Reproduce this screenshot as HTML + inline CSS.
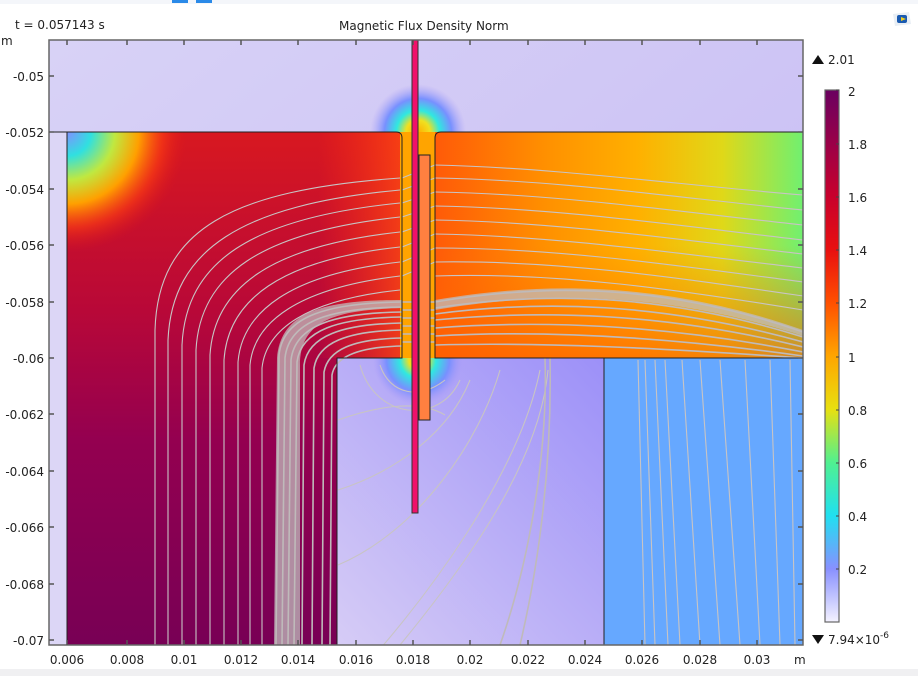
<!DOCTYPE html>
<html><head><meta charset="utf-8"><style>
html,body{margin:0;padding:0;background:#fff;width:918px;height:676px;overflow:hidden;font-family:"Liberation Sans","DejaVu Sans",sans-serif}
svg text{font-family:"DejaVu Sans","Liberation Sans",sans-serif;font-size:12px;fill:#222}
</style></head><body>
<svg width="918" height="676" viewBox="0 0 918 676" xmlns="http://www.w3.org/2000/svg">
<defs>
<linearGradient id="top" x1="0" y1="0" x2="1" y2="1"><stop offset="0" stop-color="#d8d2f6"/><stop offset="1" stop-color="#c4b8f4"/></linearGradient>
<linearGradient id="leftg" x1="0" y1="0" x2="0" y2="1"><stop offset="0" stop-color="#d81820"/><stop offset="0.35" stop-color="#b80838"/><stop offset="0.6" stop-color="#940050"/><stop offset="1" stop-color="#780055"/></linearGradient>
<linearGradient id="leftx" x1="0" y1="0" x2="1" y2="0"><stop offset="0.75" stop-color="#ff3010" stop-opacity="0"/><stop offset="1" stop-color="#ff4a10" stop-opacity="0.8"/></linearGradient>
<radialGradient id="corner" cx="67" cy="132" r="120" gradientUnits="userSpaceOnUse"><stop offset="0" stop-color="#8090ff"/><stop offset="0.2" stop-color="#30e0e0"/><stop offset="0.4" stop-color="#c0e840"/><stop offset="0.6" stop-color="#ffa000"/><stop offset="0.8" stop-color="#ff4010" stop-opacity="0.6"/><stop offset="1" stop-color="#e01818" stop-opacity="0"/></radialGradient>
<linearGradient id="rightg" x1="435" y1="0" x2="803" y2="0" gradientUnits="userSpaceOnUse"><stop offset="0" stop-color="#ff5a08"/><stop offset="0.3" stop-color="#ff9000"/><stop offset="0.55" stop-color="#ffb000"/><stop offset="0.78" stop-color="#e0d818"/><stop offset="1" stop-color="#70f070"/></linearGradient>
<linearGradient id="rightv" x1="0" y1="132" x2="0" y2="358" gradientUnits="userSpaceOnUse"><stop offset="0.5" stop-color="#ff7000" stop-opacity="0"/><stop offset="1" stop-color="#ff6000" stop-opacity="0.7"/></linearGradient>
<linearGradient id="midlow" x1="1" y1="0" x2="0" y2="1"><stop offset="0" stop-color="#9c90f8"/><stop offset="1" stop-color="#d6ccf6"/></linearGradient>
<radialGradient id="hot1" cx="418" cy="132" r="48" gradientUnits="userSpaceOnUse"><stop offset="0" stop-color="#ffb000"/><stop offset="0.25" stop-color="#f0e020"/><stop offset="0.45" stop-color="#30e8e0"/><stop offset="0.7" stop-color="#7890ff"/><stop offset="1" stop-color="#b0a4f6" stop-opacity="0"/></radialGradient>
<radialGradient id="hot2" cx="418" cy="360" r="45" gradientUnits="userSpaceOnUse"><stop offset="0" stop-color="#ffb000"/><stop offset="0.2" stop-color="#f0e020"/><stop offset="0.4" stop-color="#30e8e0"/><stop offset="0.7" stop-color="#7890ff"/><stop offset="1" stop-color="#a898f8" stop-opacity="0"/></radialGradient>
<linearGradient id="cbar" x1="0" y1="0" x2="0" y2="1"><stop offset="0" stop-color="#6a0060"/><stop offset="0.1" stop-color="#9a0048"/><stop offset="0.2" stop-color="#c8002c"/><stop offset="0.3" stop-color="#e81010"/><stop offset="0.4" stop-color="#ff5000"/><stop offset="0.5" stop-color="#ffa500"/><stop offset="0.6" stop-color="#e8e010"/><stop offset="0.7" stop-color="#50f090"/><stop offset="0.8" stop-color="#20e0f0"/><stop offset="0.9" stop-color="#8890ff"/><stop offset="1" stop-color="#f4f2ff"/></linearGradient>
<clipPath id="plot"><rect x="49" y="40" width="754" height="605"/></clipPath>
</defs>
<rect x="0" y="0" width="918" height="4" fill="#f4f6fa"/>
<rect x="172" y="0" width="16" height="3" fill="#2a8ae8"/><rect x="196" y="0" width="16" height="3" fill="#2a8ae8"/>
<rect x="0" y="669" width="918" height="7" fill="#f0f0f2"/>
<g clip-path="url(#plot)">
<rect x="49" y="40" width="754" height="605" fill="url(#top)"/>
<rect x="49" y="132" width="18" height="513" fill="#dcd6f6"/>
<rect x="340" y="60" width="160" height="75" fill="url(#hot1)"/>
<rect x="67" y="132" width="335" height="513" fill="url(#leftg)"/>
<rect x="67" y="132" width="335" height="226" fill="url(#leftx)"/>
<rect x="67" y="132" width="200" height="150" fill="url(#corner)"/>
<rect x="400" y="132" width="36" height="226" fill="#ffa400"/>
<rect x="435" y="132" width="368" height="226" fill="url(#rightg)"/>
<rect x="435" y="132" width="368" height="226" fill="url(#rightv)"/>
<rect x="337" y="358" width="267" height="287" fill="url(#midlow)"/>
<rect x="360" y="358" width="120" height="60" fill="url(#hot2)"/>
<rect x="604" y="358" width="199" height="287" fill="#66a8ff"/>
<g fill="none" stroke="#c8c4c4" stroke-width="1.1">
<path d="M155 645 L155 330 C158 230 230 190 400 178"/>
<path d="M168 645 L168 340 C172 250 240 205 400 190"/>
<path d="M182 645 L182 345 C186 262 250 218 400 203"/>
<path d="M196 645 L196 350 C200 275 260 232 400 217"/>
<path d="M210 645 L210 355 C214 288 270 246 400 232"/>
<path d="M224 645 L224 360 C228 300 280 260 400 247"/>
<path d="M238 645 L238 362 C242 312 290 274 400 262"/>
<path d="M250 645 L250 365 C254 322 298 288 400 276"/>
<path d="M262 645 L262 368 C266 330 305 300 400 290"/>
<path d="M435 165 C560 168 680 185 803 195"/>
<path d="M435 178 C560 180 680 198 803 210"/>
<path d="M435 192 C560 194 680 212 803 225"/>
<path d="M435 206 C560 208 680 226 803 240"/>
<path d="M435 220 C560 222 680 240 803 254"/>
<path d="M435 234 C560 236 680 254 803 268"/>
<path d="M435 248 C560 248 680 266 803 282"/>
<path d="M435 262 C560 260 680 278 803 296"/>
<path d="M435 276 C560 272 680 290 803 310"/>
<path d="M402 178 L435 165 M402 190 L435 178 M402 203 L435 192 M402 217 L435 206 M402 232 L435 220 M402 247 L435 234 M402 262 L435 248 M402 276 L435 262"/>
<path d="M338 420 C380 405 420 400 445 415"/>
<path d="M338 490 C400 470 450 430 470 380"/>
<path d="M338 565 C420 530 480 440 500 370"/>
<path d="M338 695 C430 600 520 470 540 370"/>
<path d="M400 645 C470 560 540 460 548 370"/>
<path d="M380 365 C390 395 420 400 445 380"/>
<path d="M360 365 C375 420 440 425 460 380"/>
<path d="M645 645 L638 360 M655 645 L645 360 M668 645 L655 360 M680 645 L665 360 M700 645 L682 360 M720 645 L700 360 M740 645 L720 360 M760 645 L745 360 M780 645 L770 360 M795 645 L790 360"/>
</g>
<path d="M274 645 L277 358 C281 312 322 300 402 300 L402 308 C340 310 300 318 300 365 L300 645 Z" fill="#c0bcbc" opacity="0.75"/>
<path d="M435 300 C540 282 660 280 803 330 L803 336 C660 290 540 292 435 310 Z" fill="#c0bcbc" opacity="0.75"/>
<g fill="none" stroke="#bfbaba" stroke-width="1.6">
<path d="M276 645 L279 355 C283 315 330 303 402 302"/>
<path d="M282 645 L285 358 C289 320 332 308 402 307"/>
<path d="M288 645 L291 360 C295 325 335 313 402 312"/>
<path d="M294 645 L297 362 C301 330 338 318 402 317"/>
<path d="M302 645 L304 365 C308 336 342 324 402 323"/>
<path d="M312 645 L314 368 C318 343 346 331 402 330"/>
<path d="M322 645 L324 372 C328 350 352 339 402 338"/>
<path d="M330 645 L332 375 C335 357 358 347 402 346"/>
<path d="M435 302 C540 284 660 282 803 332"/>
<path d="M435 308 C540 292 660 292 803 337"/>
<path d="M435 314 C540 300 660 302 803 342"/>
<path d="M435 320 C540 310 660 312 803 347"/>
<path d="M435 328 C540 320 660 324 803 352"/>
<path d="M435 336 C540 330 660 336 803 356"/>
<path d="M435 345 C540 342 660 348 803 358"/>
<path d="M402 302 L435 302 M402 310 L435 310 M402 318 L435 318 M402 326 L435 326 M402 334 L435 334 M402 342 L435 342"/>
<path d="M545 358 C548 450 530 560 500 645 M550 358 C552 460 540 560 520 645"/>
</g>
<g fill="none" stroke="#222" stroke-width="1">
<path d="M49 132 L396 132 Q402 132 402 138 L402 358 L337 358 L337 645"/>
<path d="M67 132 L67 645"/>
<path d="M803 132 L441 132 Q435 132 435 138 L435 358 L803 358"/>
<path d="M604 358 L604 645"/>
</g>
<rect x="419" y="155" width="11" height="265" fill="#ff8040" stroke="#222" stroke-width="1"/>
<rect x="412" y="38" width="6" height="475" fill="#f0106a" stroke="#333" stroke-width="1"/>
</g>
<rect x="49" y="40" width="754" height="605" fill="none" stroke="#666" stroke-width="1.5"/>
<g stroke="#555" stroke-width="1.5">
<path d="M67 40v5M127 40v5M184 40v5M241 40v5M298 40v5M356 40v5M413 40v5M470 40v5M528 40v5M585 40v5M642 40v5M700 40v5M757 40v5"/>
<path d="M67 645v-5M127 645v-5M184 645v-5M241 645v-5M298 645v-5M356 645v-5M413 645v-5M470 645v-5M528 645v-5M585 645v-5M642 645v-5M700 645v-5M757 645v-5"/>
<path d="M49 76h5M49 132h5M49 189h5M49 245h5M49 302h5M49 358h5M49 414h5M49 471h5M49 527h5M49 584h5M49 640h5"/>
<path d="M803 76h-5M803 132h-5M803 189h-5M803 245h-5M803 302h-5M803 358h-5M803 414h-5M803 471h-5M803 527h-5M803 584h-5M803 640h-5"/>
</g>
<text x="15" y="29" font-size="13">t = 0.057143 s</text>
<text x="339" y="30">Magnetic Flux Density Norm</text>
<text x="1" y="45" font-size="11">m</text>
<g text-anchor="end">
<text x="44" y="81">-0.05</text><text x="44" y="137">-0.052</text><text x="44" y="194">-0.054</text><text x="44" y="250">-0.056</text><text x="44" y="307">-0.058</text><text x="44" y="363">-0.06</text><text x="44" y="419">-0.062</text><text x="44" y="476">-0.064</text><text x="44" y="532">-0.066</text><text x="44" y="589">-0.068</text><text x="44" y="645">-0.07</text>
</g>
<g text-anchor="middle">
<text x="67" y="664">0.006</text><text x="127" y="664">0.008</text><text x="184" y="664">0.01</text><text x="241" y="664">0.012</text><text x="298" y="664">0.014</text><text x="356" y="664">0.016</text><text x="413" y="664">0.018</text><text x="470" y="664">0.02</text><text x="528" y="664">0.022</text><text x="585" y="664">0.024</text><text x="642" y="664">0.026</text><text x="700" y="664">0.028</text><text x="757" y="664">0.03</text>
</g>
<text x="794" y="664" font-size="11">m</text>
<path d="M812 64 l6 -9 l6 9z" fill="#111"/><text x="828" y="64">2.01</text>
<rect x="825" y="90" width="14" height="532" fill="url(#cbar)" stroke="#666" stroke-width="1.2"/>
<g stroke="#444"><path d="M839 90h-3M839 144h-3M839 197h-3M839 250h-3M839 303h-3M839 357h-3M839 410h-3M839 463h-3M839 516h-3M839 569h-3"/></g>
<g><text x="848" y="96">2</text><text x="848" y="149">1.8</text><text x="848" y="202">1.6</text><text x="848" y="255">1.4</text><text x="848" y="308">1.2</text><text x="848" y="362">1</text><text x="848" y="415">0.8</text><text x="848" y="468">0.6</text><text x="848" y="521">0.4</text><text x="848" y="574">0.2</text></g>
<path d="M812 635 l6 9 l6 -9z" fill="#111"/><text x="828" y="644">7.94×10<tspan dy="-6" font-size="9">-6</tspan></text>
<g transform="translate(893,12)"><path d="M0 2 L16 0 L18 12 L2 14Z" fill="#e8eef4"/><rect x="4" y="3" width="10" height="8" rx="2" fill="#1a5ab0"/><path d="M8 5 L13 7 L8 9Z" fill="#f0d020"/></g>
</svg>
</body></html>
